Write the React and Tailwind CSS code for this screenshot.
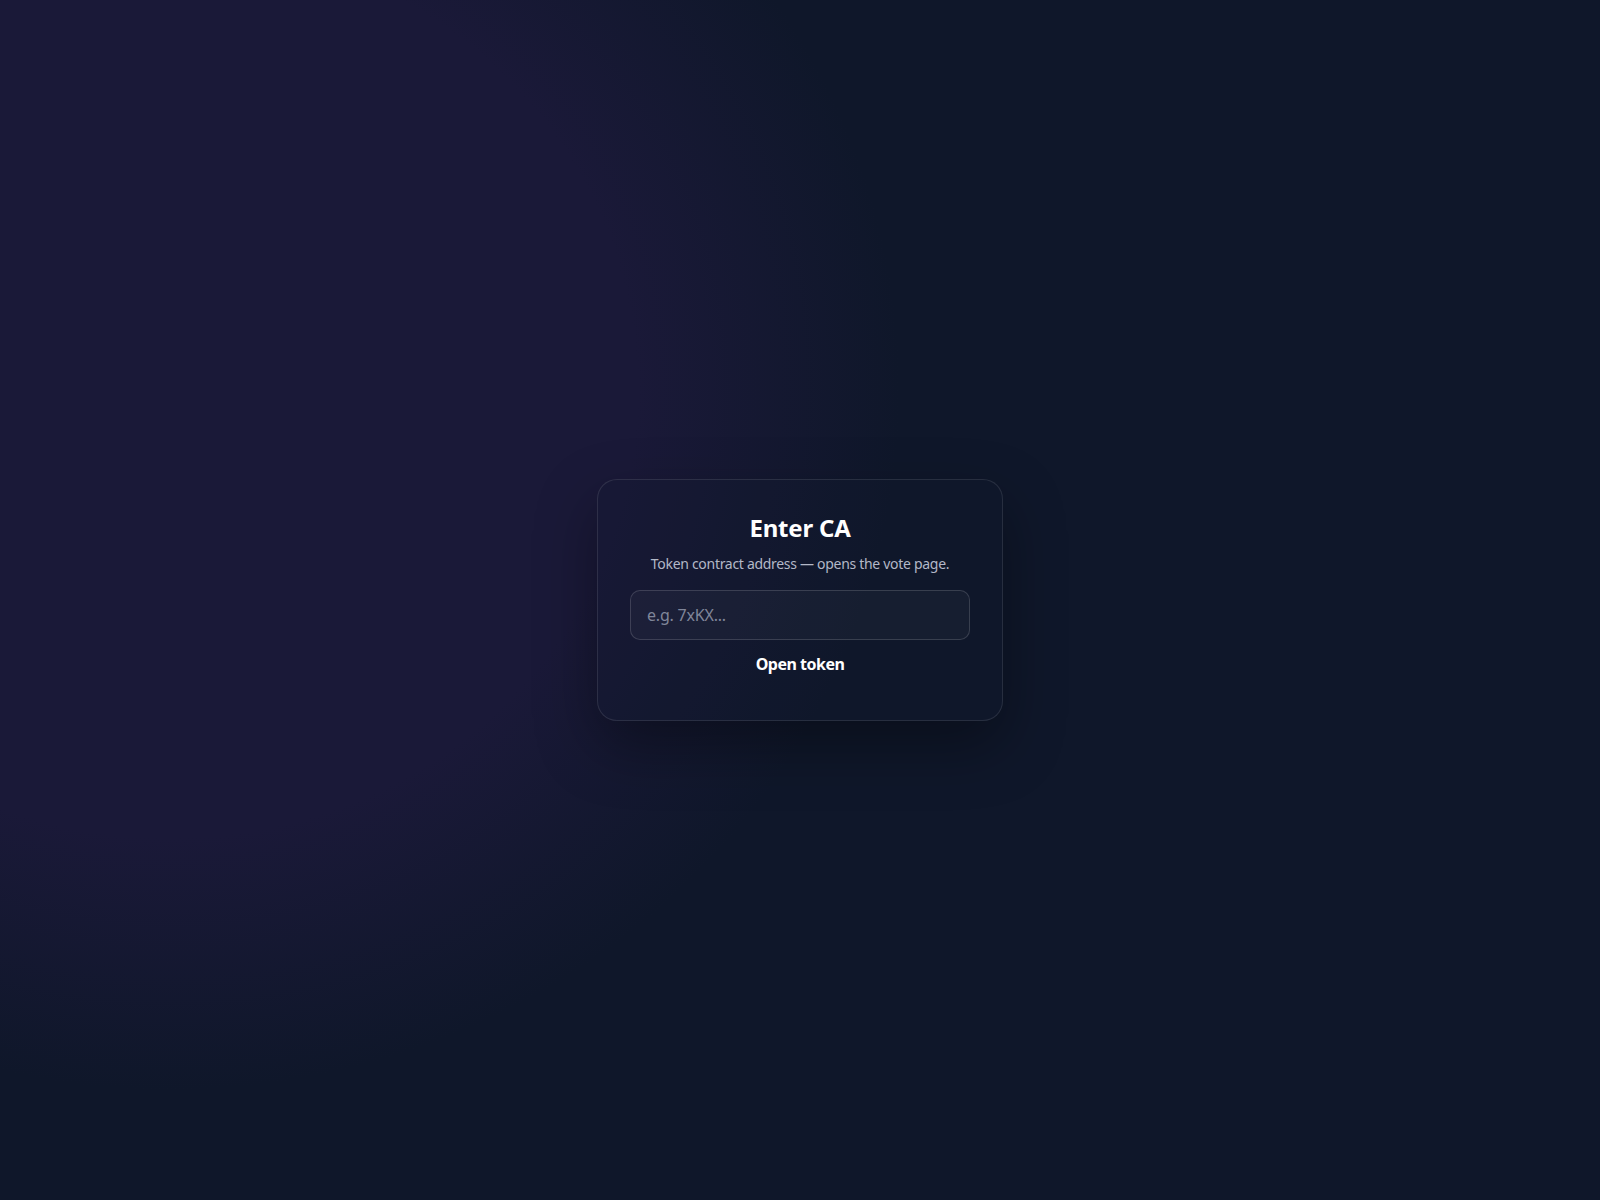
export default function App() {
  return (
    <div
      className="min-h-screen w-full flex items-center justify-center bg-[#0f172a] [font-family:'Noto_Sans','Open_Sans',sans-serif]"
      style={{
        backgroundImage:
          "radial-gradient(ellipse 730px 700px at 170px 390px, #1a1938 0%, #1a1938 64%, #0f172a 100%)",
      }}
    >
      <div className="w-[406px] rounded-[20px] border border-white/10 bg-[#0f172a]/25 p-8 shadow-[0_24px_60px_rgba(0,0,0,0.35)] flex flex-col items-center">
        <h1 className="text-2xl leading-8 font-bold text-white tracking-[-0.2px]">Enter CA</h1>
        <p className="mt-2.5 text-sm leading-5 text-[#b3b8c7] tracking-[-0.3px]">
          Token contract address — opens the vote page.
        </p>
        <input
          type="text"
          placeholder="e.g. 7xKX..."
          className="mt-4 h-[50px] w-full rounded-[10px] border border-white/15 bg-white/[0.03] px-4 text-base text-white placeholder:text-[#80869a] outline-none tracking-[-0.2px]"
        />
        <button className="w-full py-3 text-base leading-6 font-bold text-white tracking-[-0.5px]">
          Open token
        </button>
      </div>
    </div>
  );
}
